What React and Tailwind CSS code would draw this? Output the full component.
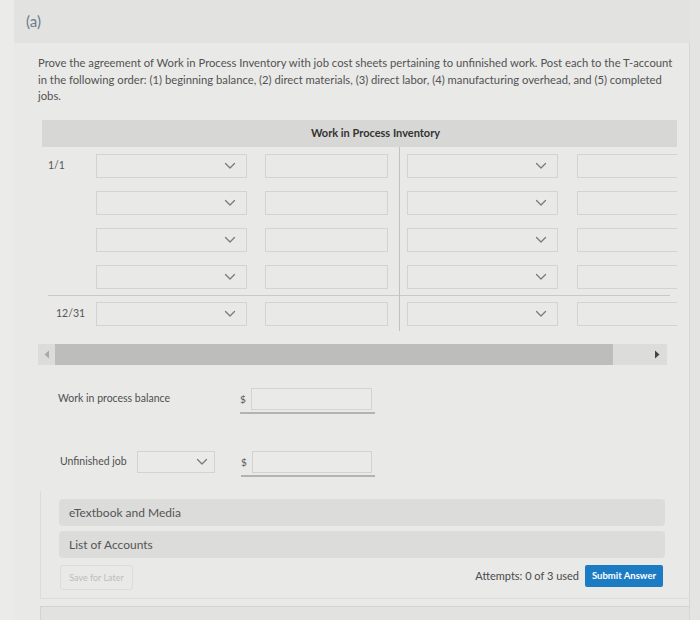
import React from "react";

const Chevron = () => (
  <svg width="12" height="8" viewBox="0 0 12 8" fill="none" className="shrink-0">
    <path d="M1.5 1.5 L6 6 L10.5 1.5" stroke="#7a7a7a" strokeWidth="1.3" strokeLinecap="round" strokeLinejoin="round" />
  </svg>
);

const Select = ({ w = "w-[151px]" }) => (
  <div className={`${w} h-[24px] shrink-0 border border-[#d3d3d3] bg-[#e9e9e8] flex items-center justify-end pr-[10px]`}>
    <Chevron />
  </div>
);

const Input = ({ w = "w-[123px]" }) => (
  <div className={`${w} h-[24px] shrink-0 border border-[#d3d3d3] bg-[#e9e9e8]`} />
);

const Row = ({ label, labelPl = "pl-[6px]" }) => (
  <div className="flex items-center h-[24px]">
    <div className={`w-[54px] shrink-0 ${labelPl} text-[10.5px] text-[#555]`}>{label}</div>
    <Select />
    <div className="w-[18px] shrink-0" />
    <Input />
    <div className="w-[19px] shrink-0" />
    <Select />
    <div className="w-[19px] shrink-0" />
    <Input />
  </div>
);

export default function App() {
  return (
    <div
      className="w-[700px] h-[620px] bg-[#e4e4e3] overflow-hidden flex"
      style={{ fontFamily: "Lato, 'Open Sans', sans-serif" }}
    >
      <div className="w-[14px] shrink-0 bg-[#ebebea]" />
      <div className="w-[676px] shrink-0 flex flex-col">
        <div className="h-[43px] bg-[#e2e2e1] pl-[12px] flex items-center text-[15px] text-[#6a7b8b]">(a)</div>
        <div className="flex-1 bg-[#e9e9e8] border-r border-[#d6d6d5] flex flex-col">
          <p className="pl-[24px] pr-[8px] pt-[12px] text-[11.25px] leading-[16.5px] text-[#525252]">
            Prove the agreement of Work in Process Inventory with job cost sheets pertaining to unfinished work. Post each to the T-account in the following order: (1) beginning balance, (2) direct materials, (3) direct labor, (4) manufacturing overhead, and (5) completed jobs.
          </p>

          <div className="ml-[28px] mt-[15px] w-[635px] overflow-hidden">
            <div className="h-[27px] bg-[#d7d7d6] flex items-center justify-center pl-[32px] text-[11px] font-bold text-[#333]">
              Work in Process Inventory
            </div>
            <div className="relative pt-[7px] pb-[5px] flex flex-col gap-[13px]">
              <div className="absolute left-[357px] top-0 bottom-0 w-px bg-[#c4bfc2]" />
              <Row label="1/1" />
              <Row label="" />
              <Row label="" />
              <Row label="" />
              <div className="-my-[7px] ml-[6px] mr-[7px] h-[1.5px] bg-[#c9c9c8]" />
              <Row label="12/31" labelPl="pl-[14px]" />
            </div>
          </div>

          <div className="ml-[24px] mt-[13px] w-[629px] h-[21px] flex bg-[#dcdcdb]">
            <div className="w-[17px] flex items-center justify-center">
              <svg width="6" height="9" viewBox="0 0 6 9"><path d="M5 0.5 L0.5 4.5 L5 8.5 Z" fill="#a9a9a9" /></svg>
            </div>
            <div className="w-[558px] bg-[#bdbdbc]" />
            <div className="flex-1 flex items-center justify-end pr-[7px]">
              <svg width="6" height="9" viewBox="0 0 6 9"><path d="M1 0.5 L5.5 4.5 L1 8.5 Z" fill="#444" /></svg>
            </div>
          </div>

          <div className="mt-[22px] flex items-center h-[24px]">
            <div className="w-[226px] pl-[44px] text-[10.5px] text-[#4f4f4f]">Work in process balance</div>
            <div className="w-[11px] text-[10px] text-[#555]">$</div>
            <div className="w-[121px] h-[22px] border border-[#d3d3d3] bg-[#eaeae9]" />
          </div>
          <div className="ml-[226px] mt-[1px] w-[135px] h-[2px] bg-[#b3b3b2]" />

          <div className="mt-[36px] flex items-center h-[24px]">
            <div className="w-[123px] pl-[46px] text-[10.5px] text-[#4f4f4f]">Unfinished job</div>
            <div className="w-[78px] h-[22px] border border-[#d3d3d3] bg-[#eaeae9] flex items-center justify-end pr-[6px]">
              <Chevron />
            </div>
            <div className="w-[26px]" />
            <div className="w-[11px] text-[10px] text-[#555]">$</div>
            <div className="w-[120px] h-[22px] border border-[#d3d3d3] bg-[#eaeae9]" />
          </div>
          <div className="ml-[227px] mt-[1px] w-[134px] h-[2px] bg-[#b3b3b2]" />

          <div className="ml-[26px] mt-[14px] w-[650px] border-l border-b border-[#dcdcdb] pb-[8px]">
            <div className="pt-[8px] flex flex-col gap-[5px] pl-[18px] pr-[25px]">
              <div className="h-[27px] rounded-[4px] bg-[#dcdcdb] flex items-center pl-[10px] text-[12px] text-[#555]">eTextbook and Media</div>
              <div className="h-[27px] rounded-[4px] bg-[#dcdcdb] flex items-center pl-[10px] text-[12px] text-[#555]">List of Accounts</div>
            </div>
            <div className="mt-[7px] pl-[19px] pr-[27px] flex items-center justify-between">
              <div className="h-[25px] w-[73px] border border-[#dcdcdb] rounded-[3px] flex items-center justify-center text-[9px] text-[#bdbdbd]">Save for Later</div>
              <div className="flex items-center gap-[6px] pb-[3px]">
                <span className="text-[11px] text-[#4a4a4a]">Attempts: 0 of 3 used</span>
                <div className="h-[22px] w-[78px] rounded-[2px] bg-[#1c7cc3] flex items-center justify-center text-[9.5px] font-bold text-white">Submit Answer</div>
              </div>
            </div>
          </div>
          <div className="ml-[26px] mt-[7px] flex-1 border-l border-t border-[#d3d3d2] bg-[#e2e2e1]" />
        </div>
      </div>
    </div>
  );
}
